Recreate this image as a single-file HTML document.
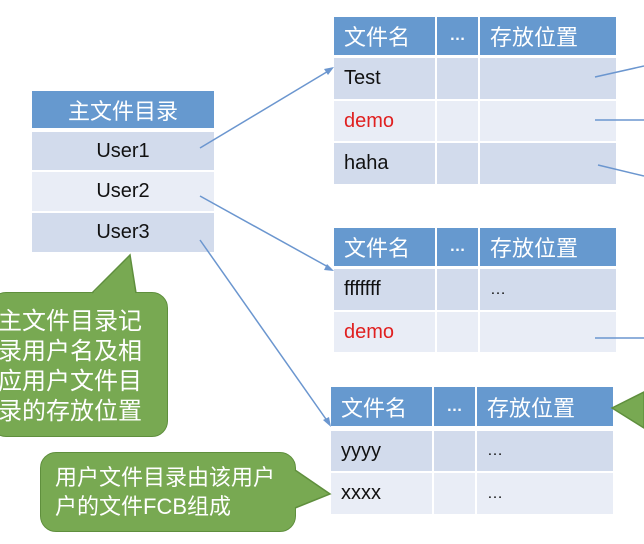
<!DOCTYPE html>
<html><head><meta charset="utf-8"><style>
*{margin:0;padding:0;box-sizing:border-box}
body{width:644px;height:544px;background:#fff;position:relative;overflow:hidden;font-family:"Liberation Sans","Noto Sans CJK SC",sans-serif}
.c{position:absolute;display:flex;align-items:center;font-size:20px;color:#111}
.h{background:#6699cf;color:#fff;font-size:22px}
.a{background:#d2dbec}.b{background:#e9edf6}
.r{color:#e02020}
.ctr{justify-content:center}
.e{font-size:16px;font-weight:bold}
.g{position:absolute;background:#78a952;border:1.5px solid #5f8f3d;color:#fff;border-radius:16px;white-space:nowrap}
</style></head><body>
<div class="c h ctr" style="left:32px;top:91px;width:182px;height:37px">主文件目录</div>
<div class="c a ctr" style="left:32px;top:132px;width:182px;height:38px">User1</div>
<div class="c b ctr" style="left:32px;top:172px;width:182px;height:39px">User2</div>
<div class="c a ctr" style="left:32px;top:213px;width:182px;height:39px">User3</div>
<div class="c h" style="left:334px;top:17px;width:101px;height:38px;padding-left:10px">文件名</div>
<div class="c h ctr e" style="left:437px;top:17px;width:41px;height:38px">…</div>
<div class="c h" style="left:480px;top:17px;width:136px;height:38px;padding-left:10px">存放位置</div>
<div class="c a" style="left:334px;top:58px;width:101px;height:41px;padding-left:10px">Test</div>
<div class="c a" style="left:437px;top:58px;width:41px;height:41px"></div>
<div class="c a" style="left:480px;top:58px;width:136px;height:41px"></div>
<div class="c b r" style="left:334px;top:101px;width:101px;height:40px;padding-left:10px">demo</div>
<div class="c b" style="left:437px;top:101px;width:41px;height:40px"></div>
<div class="c b" style="left:480px;top:101px;width:136px;height:40px"></div>
<div class="c a" style="left:334px;top:143px;width:101px;height:41px;padding-left:10px">haha</div>
<div class="c a" style="left:437px;top:143px;width:41px;height:41px"></div>
<div class="c a" style="left:480px;top:143px;width:136px;height:41px"></div>
<div class="c h" style="left:334px;top:228px;width:101px;height:38px;padding-left:10px">文件名</div>
<div class="c h ctr e" style="left:437px;top:228px;width:41px;height:38px">…</div>
<div class="c h" style="left:480px;top:228px;width:136px;height:38px;padding-left:10px">存放位置</div>
<div class="c a" style="left:334px;top:269px;width:101px;height:41px;padding-left:10px">fffffff</div>
<div class="c a" style="left:437px;top:269px;width:41px;height:41px"></div>
<div class="c a" style="left:480px;top:269px;width:136px;height:41px;padding-left:10px;font-size:16px">…</div>
<div class="c b r" style="left:334px;top:312px;width:101px;height:40px;padding-left:10px">demo</div>
<div class="c b" style="left:437px;top:312px;width:41px;height:40px"></div>
<div class="c b" style="left:480px;top:312px;width:136px;height:40px"></div>
<div class="c h" style="left:331px;top:387px;width:101px;height:39px;padding-left:10px">文件名</div>
<div class="c h ctr e" style="left:434px;top:387px;width:41px;height:39px">…</div>
<div class="c h" style="left:477px;top:387px;width:136px;height:39px;padding-left:10px">存放位置</div>
<div class="c a" style="left:331px;top:431px;width:101px;height:40px;padding-left:10px">yyyy</div>
<div class="c a" style="left:434px;top:431px;width:41px;height:40px"></div>
<div class="c a" style="left:477px;top:431px;width:136px;height:40px;padding-left:10px;font-size:16px">…</div>
<div class="c b" style="left:331px;top:473px;width:101px;height:41px;padding-left:10px">xxxx</div>
<div class="c b" style="left:434px;top:473px;width:41px;height:41px"></div>
<div class="c b" style="left:477px;top:473px;width:136px;height:41px;padding-left:10px;font-size:16px">…</div>
<svg width="644" height="544" style="position:absolute;left:0;top:0">
<g stroke="#6b96cf" stroke-width="1.5" fill="none">
<line x1="200" y1="148" x2="330" y2="70"/>
<line x1="200" y1="196" x2="330" y2="268"/>
<line x1="200" y1="240" x2="328" y2="422"/>
<line x1="595" y1="77" x2="644" y2="66"/>
<line x1="595" y1="120" x2="644" y2="120"/>
<line x1="598" y1="165" x2="644" y2="176"/>
<line x1="595" y1="338" x2="644" y2="338"/>
</g>
<g fill="#6b96cf">
<polygon points="334,67 324,69 328,75"/>
<polygon points="334,271 324,270 327,264"/>
<polygon points="331,427 323,420 329,417"/>
</g>
</svg>
<div class="g" style="left:-10px;top:292px;width:178px;height:145px;padding:14px 0 0 7px;font-size:24px;line-height:30px">主文件目录记<br>录用户名及相<br>应用户文件目<br>录的存放位置</div>
<div class="g" style="left:40px;top:452px;width:256px;height:80px;padding:10px 0 0 14px;font-size:22px;line-height:29px">用户文件目录由该用户<br>户的文件FCB组成</div>
<svg width="644" height="544" style="position:absolute;left:0;top:0">
<polygon points="92,294 130,255 136,294" fill="#78a952"/>
<polyline points="92,293 130,255 136,293" fill="none" stroke="#5f8f3d" stroke-width="1.5"/>
<polygon points="294,470 330,494 294,508" fill="#78a952"/>
<polyline points="295,470 330,494 295,508" fill="none" stroke="#5f8f3d" stroke-width="1.5"/>
<polygon points="612,408 644,392 644,428" fill="#78a952" stroke="#5f8f3d" stroke-width="1.5"/>
</svg>
</body></html>
